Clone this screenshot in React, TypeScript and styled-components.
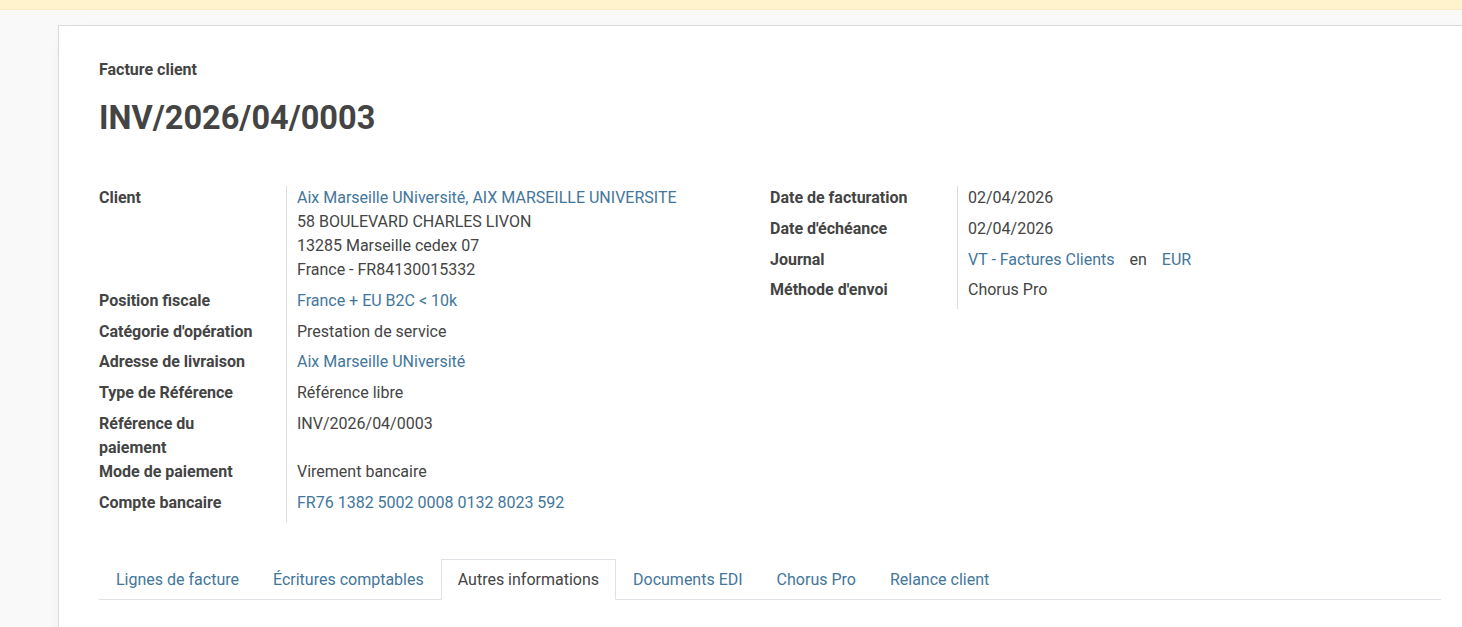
import styled, { createGlobalStyle } from "styled-components";

const GlobalStyle = createGlobalStyle`
    html, body {
        margin: 0;
        padding: 0;
        overflow: hidden;
        background: #f9f9f9;
        font-family: Roboto, "Noto Sans", sans-serif;
        color: #444444;
    }
    * {
        box-sizing: border-box;
    }
`

const Alerte = styled.div`
    height: 10px;
    background: #fff3cd;
    border-bottom: 1px solid #fbecc0;
`

const Page = styled.div`
    padding: 15px 0 0 58px;
`

const Feuille = styled.div`
    width: 1424px;
    min-height: 620px;
    background: #ffffff;
    border: 1px solid #d8dadd;
    box-shadow: 0 5px 20px -15px rgba(0, 0, 0, 0.3);
    padding: 34px 40px 0 40px;
`

const SousTitre = styled.div`
    font-size: 16px;
    font-weight: 700;
    line-height: 19px;
`

const Titre = styled.h1`
    margin: 20px 0 0 0;
    font-size: 32.5px;
    font-weight: 700;
    line-height: 38px;
`

const Groupes = styled.div`
    display: flex;
    flex-direction: row;
    margin-top: 49px;
`

const Groupe = styled.div<{ $largeur?: number }>`
    width: ${(p) => (p.$largeur ? p.$largeur + "px" : "auto")};
    display: flex;
    flex-direction: column;
`

const Ligne = styled.div`
    display: flex;
    flex-direction: row;
    align-items: stretch;
    font-size: 16px;
    line-height: 24px;
`

const Etiquette = styled.div`
    width: 187px;
    flex-shrink: 0;
    font-weight: 700;
    padding-right: 24px;
`

const Valeur = styled.div`
    border-left: 1px solid #dddddd;
    padding: 0 0 6.8px 10px;
    flex: 1;
`

const Lien = styled.span`
    color: #43769a;
`

const Sep = styled.span`
    margin: 0 15px;
`

const Onglets = styled.div`
    display: flex;
    flex-direction: row;
    margin-top: 37px;
    border-bottom: 1px solid #dee2e6;
`

const Onglet = styled.div<{ $actif?: boolean }>`
    font-size: 16px;
    line-height: 24px;
    padding: 8px 16px 7px 16px;
    margin-bottom: -1px;
    color: ${(p) => (p.$actif ? "#444444" : "#43769a")};
    background: ${(p) => (p.$actif ? "#ffffff" : "transparent")};
    border: 1px solid ${(p) => (p.$actif ? "#dee2e6" : "transparent")};
    border-bottom: 1px solid ${(p) => (p.$actif ? "#ffffff" : "transparent")};
`

const onglets = [
    "Lignes de facture",
    "Écritures comptables",
    "Autres informations",
    "Documents EDI",
    "Chorus Pro",
    "Relance client",
]

export default function App() {
    return (
        <>
            <GlobalStyle />
            <Alerte />
            <Page>
                <Feuille>
                    <SousTitre>Facture client</SousTitre>
                    <Titre>INV/2026/04/0003</Titre>
                    <Groupes>
                        <Groupe $largeur={671}>
                            <Ligne>
                                <Etiquette>Client</Etiquette>
                                <Valeur>
                                    <Lien>Aix Marseille UNiversité, AIX MARSEILLE UNIVERSITE</Lien>
                                    <br />
                                    58 BOULEVARD CHARLES LIVON
                                    <br />
                                    13285 Marseille cedex 07
                                    <br />
                                    France - FR84130015332
                                </Valeur>
                            </Ligne>
                            <Ligne>
                                <Etiquette>Position fiscale</Etiquette>
                                <Valeur><Lien>France + EU B2C &lt; 10k</Lien></Valeur>
                            </Ligne>
                            <Ligne>
                                <Etiquette>Catégorie d'opération</Etiquette>
                                <Valeur>Prestation de service</Valeur>
                            </Ligne>
                            <Ligne>
                                <Etiquette>Adresse de livraison</Etiquette>
                                <Valeur><Lien>Aix Marseille UNiversité</Lien></Valeur>
                            </Ligne>
                            <Ligne>
                                <Etiquette>Type de Référence</Etiquette>
                                <Valeur>Référence libre</Valeur>
                            </Ligne>
                            <Ligne>
                                <Etiquette>Référence du paiement</Etiquette>
                                <Valeur>INV/2026/04/0003</Valeur>
                            </Ligne>
                            <Ligne>
                                <Etiquette>Mode de paiement</Etiquette>
                                <Valeur>Virement bancaire</Valeur>
                            </Ligne>
                            <Ligne>
                                <Etiquette>Compte bancaire</Etiquette>
                                <Valeur><Lien>FR76 1382 5002 0008 0132 8023 592</Lien></Valeur>
                            </Ligne>
                        </Groupe>
                        <Groupe $largeur={640}>
                            <Ligne>
                                <Etiquette>Date de facturation</Etiquette>
                                <Valeur>02/04/2026</Valeur>
                            </Ligne>
                            <Ligne>
                                <Etiquette>Date d'échéance</Etiquette>
                                <Valeur>02/04/2026</Valeur>
                            </Ligne>
                            <Ligne>
                                <Etiquette>Journal</Etiquette>
                                <Valeur>
                                    <Lien>VT - Factures Clients</Lien>
                                    <Sep>en</Sep>
                                    <Lien>EUR</Lien>
                                </Valeur>
                            </Ligne>
                            <Ligne>
                                <Etiquette>Méthode d'envoi</Etiquette>
                                <Valeur>Chorus Pro</Valeur>
                            </Ligne>
                        </Groupe>
                    </Groupes>
                    <Onglets>
                        {onglets.map((o) => (
                            <Onglet key={o} $actif={o === "Autres informations"}>{o}</Onglet>
                        ))}
                    </Onglets>
                </Feuille>
            </Page>
        </>
    )
}
